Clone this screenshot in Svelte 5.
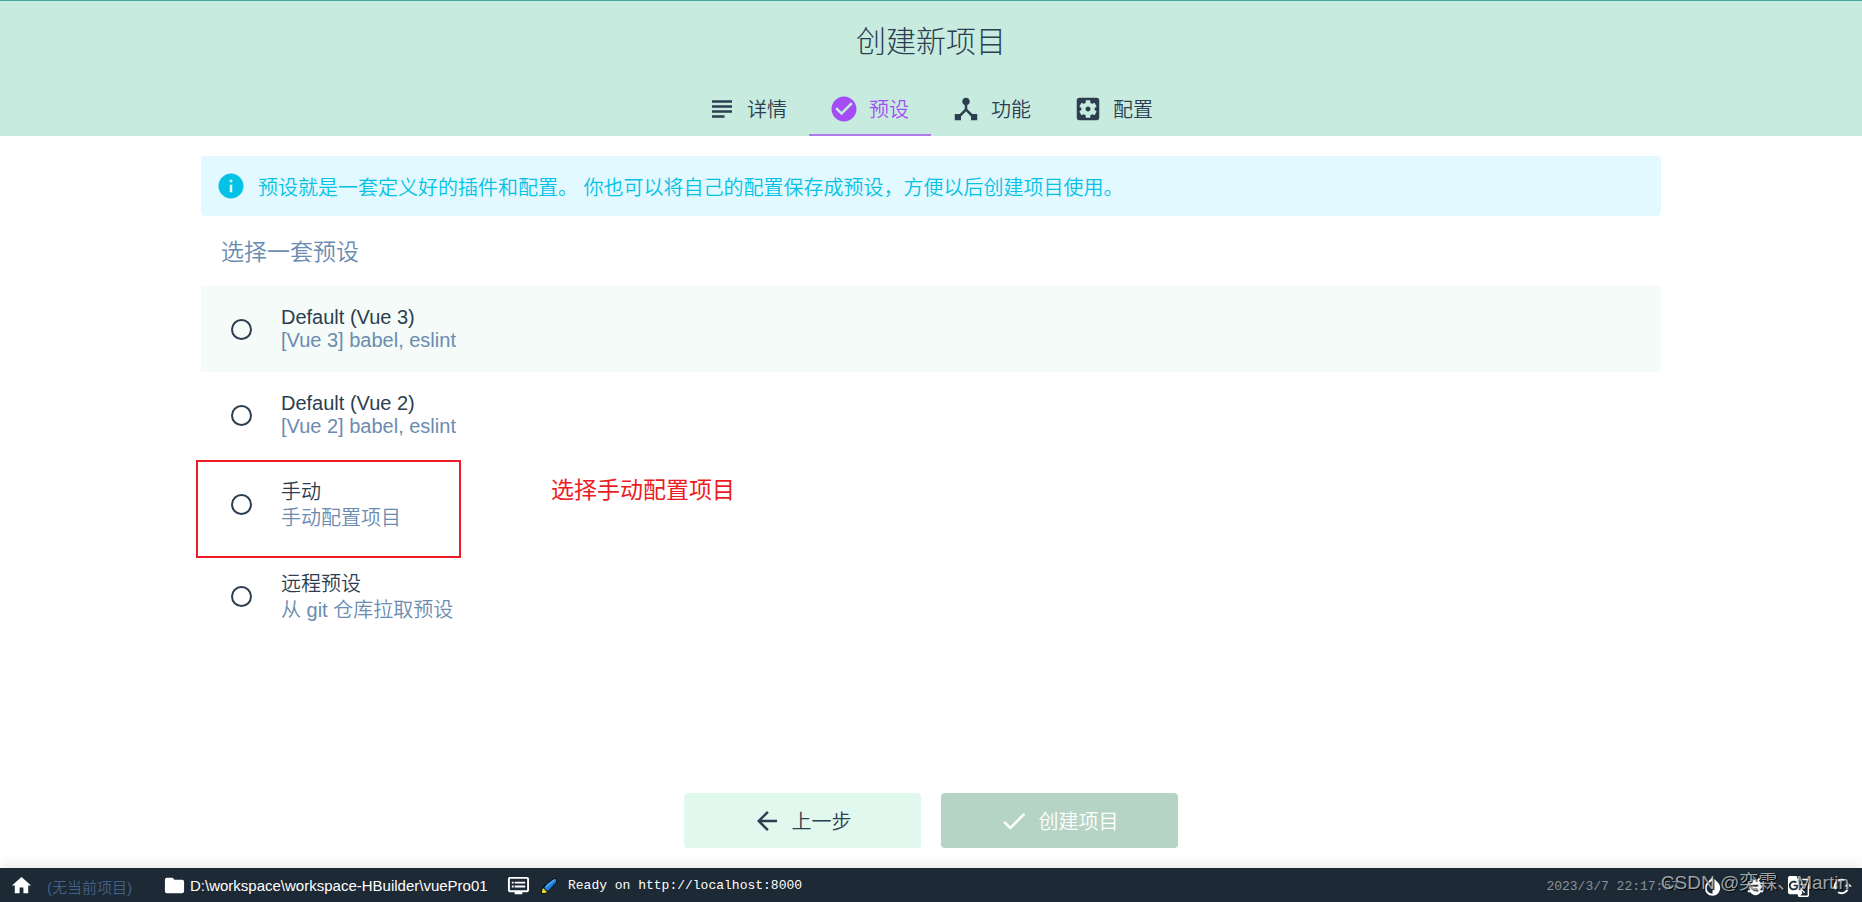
<script lang="ts">
  const tabs = [
    { id: "details", label: "详情", icon: "M14 17H4v2h10v-2zm6-8H4v2h16V9zM4 15h16v-2H4v2zM4 5v2h16V5H4z" },
    { id: "presets", label: "预设", icon: "M12 2C6.48 2 2 6.48 2 12s4.48 10 10 10 10-4.48 10-10S17.52 2 12 2zm-2 15l-5-5 1.41-1.41L10 14.17l7.59-7.59L19 8l-9 9z" },
    { id: "features", label: "功能", icon: "M17 16l-4-4V8.82C14.16 8.4 15 7.3 15 6c0-1.66-1.34-3-3-3S9 4.34 9 6c0 1.3.84 2.4 2 2.82V12l-4 4H3v5h5v-3.05l4-4.2 4 4.2V21h5v-5h-4z" },
    { id: "config", label: "配置", icon: "M12 10c-1.1 0-2 .9-2 2s.9 2 2 2 2-.9 2-2-.9-2-2-2zm7-7H5c-1.11 0-2 .9-2 2v14c0 1.1.89 2 2 2h14c1.11 0 2-.9 2-2V5c0-1.1-.89-2-2-2zm-1.75 9c0 .23-.02.46-.05.68l1.48 1.16c.13.11.17.3.08.45l-1.4 2.42c-.09.15-.27.21-.43.15l-1.74-.7c-.36.28-.76.51-1.18.69l-.26 1.85c-.03.17-.18.3-.35.3h-2.8c-.17 0-.32-.13-.35-.29l-.26-1.85c-.43-.18-.82-.41-1.18-.69l-1.74.7c-.16.06-.34 0-.43-.15l-1.4-2.42c-.09-.15-.05-.34.08-.45l1.48-1.16c-.03-.23-.05-.46-.05-.69 0-.23.02-.46.05-.68l-1.48-1.16c-.13-.11-.17-.3-.08-.45l1.4-2.42c.09-.15.27-.21.43-.15l1.74.7c.36-.28.76-.51 1.18-.69l.26-1.85c.03-.17.18-.3.35-.3h2.8c.17 0 .32.13.35.29l.26 1.85c.43.18.82.41 1.18.69l1.74-.7c.16-.06.34 0 .43.15l1.4 2.42c.09.15.05.34-.08.45l-1.48 1.16c.03.23.05.46.05.69z" },
  ];

  const presets = [
    { id: "vue3", name: "Default (Vue 3)", info: "[Vue 3] babel, eslint" },
    { id: "vue2", name: "Default (Vue 2)", info: "[Vue 2] babel, eslint" },
    { id: "manual", name: "手动", info: "手动配置项目", cjk: true, marked: true },
    { id: "remote", name: "远程预设", info: "从 git 仓库拉取预设", cjk: true },
  ];

  const tools = [
    { label: "切换主题", icon: "M17.66 7.93L12 2.27 6.34 7.93c-3.12 3.12-3.12 8.19 0 11.31C7.9 20.8 9.95 21.58 12 21.58s4.1-.78 5.66-2.34c3.12-3.12 3.12-8.19 0-11.31zM12 19.59c-1.6 0-3.11-.62-4.24-1.76C6.62 16.69 6 15.19 6 13.59s.62-3.11 1.76-4.24L12 5.1v14.49z" },
    { label: "报告错误", icon: "M20 8h-2.81c-.45-.78-1.07-1.45-1.82-1.96L17 4.41 15.59 3l-2.17 2.17C12.96 5.06 12.49 5 12 5s-.96.06-1.41.17L8.41 3 7 4.41l1.62 1.63C7.88 6.55 7.26 7.22 6.81 8H4v2h2.09c-.05.33-.09.66-.09 1v1H4v2h2v1c0 .34.04.67.09 1H4v2h2.81c1.04 1.79 2.97 3 5.19 3s4.15-1.21 5.19-3H20v-2h-2.09c.05-.33.09-.66.09-1v-1h2v-2h-2v-1c0-.34-.04-.67-.09-1H20V8zm-6 8h-4v-2h4v2zm0-4h-4v-2h4v2z" },
    { label: "翻译", icon: "M21 4H11l-1-3H3c-1.1 0-2 .9-2 2v15c0 1.1.9 2 2 2h8l1 3h9c1.1 0 2-.9 2-2V6c0-1.1-.9-2-2-2zM7 16c-2.76 0-5-2.24-5-5s2.24-5 5-5c1.35 0 2.48.5 3.35 1.3L9.03 8.57c-.38-.36-1.04-.78-2.03-.78-1.74 0-3.15 1.44-3.15 3.21S5.26 14.21 7 14.21c2.01 0 2.84-1.44 2.92-2.41H7v-1.71h4.68c.07.31.12.61.12 1.02C11.8 13.97 9.89 16 7 16zm6.17-5.42h3.7c-.43 1.25-1.11 2.43-2.05 3.47-.31-.35-.6-.72-.86-1.1l-.79-2.37zm8.33 9.92c0 .55-.45 1-1 1H14l2-2.5-1.04-3.1 3.1 3.1.92-.92-3.3-3.25.02-.02c1.13-1.25 1.93-2.69 2.4-4.22H20v-1.3h-4.53V8h-1.29v1.29h-1.44L11.46 5.5h9.04c.55 0 1 .45 1 1v14z" },
    { label: "刷新", icon: "M19 8l-4 4h3c0 3.31-2.69 6-6 6-1.01 0-1.97-.25-2.8-.7l-1.46 1.46C8.97 19.54 10.43 20 12 20c4.42 0 8-3.58 8-8h3l-4-4zM6 12c0-3.31 2.69-6 6-6 1.01 0 1.97.25 2.8.7l1.46-1.46C15.03 4.46 13.57 4 12 4c-4.42 0-8 3.58-8 8H1l4 4 4-4H6z" },
  ];

  let current = $state("presets");
  let selected = $state("");
</script>

{#snippet icon(d: string)}
  <svg class="icon" viewBox="0 0 24 24" aria-hidden="true"><path {d} /></svg>
{/snippet}

<div class="app">
  <header>
    <h1>创建新项目</h1>
    <nav>
      {#each tabs as tab}
        <button class="tab" class:active={current === tab.id} onclick={() => (current = tab.id)}>
          {@render icon(tab.icon)}
          {tab.label}
        </button>
      {/each}
    </nav>
  </header>

  <main>
    <p class="notice">
      {@render icon("M12 2C6.48 2 2 6.48 2 12s4.48 10 10 10 10-4.48 10-10S17.52 2 12 2zm1 15h-2v-6h2v6zm0-8h-2V7h2v2z")}
      <span>预设就是一套定义好的插件和配置。 你也可以将自己的配置保存成预设，方便以后创建项目使用。</span>
    </p>
    <h2>选择一套预设</h2>
    <div class="presets">
      {#each presets as p, i}
        <label class="preset" class:hover={i === 0} class:cjk={p.cjk}>
          <input type="radio" name="preset" value={p.id} bind:group={selected} />
          <span class="text">
            <span class="name">{p.name}</span>
            <span class="info">{p.info}</span>
          </span>
          {#if p.marked}
            <span class="mark"></span>
            <span class="mark-note">选择手动配置项目</span>
          {/if}
        </label>
      {/each}
    </div>
  </main>

  <div class="actions">
    <button class="btn">
      {@render icon("M20 11H7.83l5.59-5.59L12 4l-8 8 8 8 1.41-1.41L7.83 13H20v-2z")}
      上一步
    </button>
    <button class="btn primary" disabled={!selected}>
      {@render icon("M9 16.17L4.83 12l-1.42 1.41L9 19 21 7l-1.41-1.41z")}
      创建项目
    </button>
  </div>

  <footer>
    <a class="home" href="#home" aria-label="首页">{@render icon("M10 20v-6h4v6h5v-8h3L12 3 2 12h3v8z")}</a>
    <span class="project">(无当前项目)</span>
    <a class="path" href="#folder">
      {@render icon("M10 4H4c-1.1 0-1.99.9-1.99 2L2 18c0 1.1.9 2 2 2h16c1.1 0 2-.9 2-2V8c0-1.1-.9-2-2-2h-8l-2-2z")}
      D:\workspace\workspace-HBuilder\vuePro01
    </a>
    <button class="log">
      {@render icon("M21 3H3c-1.1 0-2 .9-2 2v12c0 1.1.9 2 2 2h5v2h8v-2h5c1.1 0 1.99-.9 1.99-2L23 5c0-1.1-.9-2-2-2zm0 14H3V5h18v12zm-2-9H8v2h11V8zm0 4H8v2h11v-2zM7 8H5v2h2V8zm0 4H5v2h2v-2z")}
      <svg class="rocket" viewBox="0 0 16 16" aria-hidden="true">
        <path d="M13 0h3v4L8 13l-4 3H0v-3l2-5z" fill="#0b1420" />
        <path d="M13 1h2v3l-8 9-4-3 3-4z" fill="#1f83dd" />
        <path d="M13 2L5 9" stroke="#7cc4ff" />
        <path d="M2 10l4 4-2 1H1v-2z" fill="#f3d21b" />
      </svg>
      Ready on http://localhost:8000
    </button>
    <time>2023/3/7 22:17:57</time>
    <div class="tools">
      {#each tools as t}
        <button aria-label={t.label}>{@render icon(t.icon)}</button>
      {/each}
    </div>
    <span class="watermark">CSDN @奕霖、Martin</span>
  </footer>
</div>

<style>
  :global(body) { background: #fff; }
  .app {
    min-height: 100vh;
    display: flex;
    flex-direction: column;
    font-family: "Liberation Sans", "Noto Sans CJK SC", sans-serif;
    font-size: 20px;
    font-weight: 350;
    color: #2c3e50;
  }
  button { border: 0; padding: 0; background: none; font: inherit; color: inherit; cursor: pointer; }
  a { color: inherit; text-decoration: none; }
  .icon { width: 30px; height: 30px; fill: currentColor; flex: none; }

  header { background: #c8ebdf; border-top: 1px solid #4aa3a3; }
  h1 { margin: 0; padding-top: 19px; font-size: 30px; line-height: 44px; font-weight: 300; text-align: center; }
  nav { display: flex; justify-content: center; padding-top: 18px; }
  .tab { display: flex; align-items: center; gap: 10px; height: 54px; padding: 1px 22px 0 20px; border-bottom: 2px solid transparent; }
  .tab.active { color: #a44cf6; border-color: #b07be8; }

  main { width: calc(100% - 40px); max-width: 1460px; margin: 20px auto 0; flex: 1; }
  .notice { display: flex; align-items: center; gap: 12px; height: 60px; margin: 0; padding-left: 15px; border-radius: 4px; background: #e2f9ff; color: #03c2e6; }
  h2 { margin: 0; padding: 19px 20px 17px; font-size: 23px; line-height: 34px; font-weight: 350; color: #6b8bb0; }
  .preset { position: relative; display: flex; align-items: center; gap: 29px; padding: 20px 30px; line-height: 23px; }
  .preset.cjk { padding: 19px 30px; line-height: 26px; }
  .preset.cjk .text { padding-top: 2px; }
  .preset.hover { background: #f4fbf8; }
  .preset input { appearance: none; width: 21px; height: 21px; margin: 0; border: 2px solid #2c3e50; border-radius: 50%; }
  .preset input:checked { background: #42b983; }
  .text { display: flex; flex-direction: column; }
  .info { color: #6b8bb0; }
  .mark { position: absolute; left: -5px; top: 2px; width: 261px; height: 94px; border: 2px solid #ed1c24; }
  .mark-note { position: absolute; left: 350px; top: 17px; font-size: 23px; line-height: 30px; font-weight: 400; color: #ed1c24; }

  .actions { display: flex; justify-content: center; gap: 20px; padding-bottom: 20px; }
  .btn { display: flex; align-items: center; justify-content: center; gap: 10px; width: 237px; height: 55px; padding-right: 2px; border-radius: 4px; background: #e0f8ee; }
  .primary { background: #b6d4c6; color: #fff; }

  footer {
    position: relative;
    display: flex;
    align-items: center;
    height: 34px;
    background: #1d2935;
    color: #fff;
    font-size: 15px;
    font-weight: 400;
    white-space: nowrap;
    box-shadow: 0 -2px 14px rgba(0, 0, 0, 0.1);
  }
  footer .icon { width: 23px; height: 23px; }
  footer a, footer button { display: flex; align-items: center; }
  .home { padding: 0 14px 0 10px; }
  .project { width: 116px; padding-top: 2px; font-weight: 350; color: #42618a; }
  .path { gap: 4px; width: 344px; }
  .log { gap: 11px; flex: 1; padding-top: 1px; font-family: "Liberation Mono", monospace; font-size: 13px; }
  .rocket { width: 16px; height: 16px; }
  time { padding-top: 3px; font-family: "Liberation Mono", monospace; font-size: 13px; color: #89919a; }
  .tools { display: flex; gap: 20px; padding: 2px 9px 0 22px; }
  .watermark { position: absolute; right: 13px; top: 0; font-size: 19px; line-height: 30px; color: rgba(220, 224, 228, 0.7); text-shadow: 1px 1px 1px #000; }
</style>
